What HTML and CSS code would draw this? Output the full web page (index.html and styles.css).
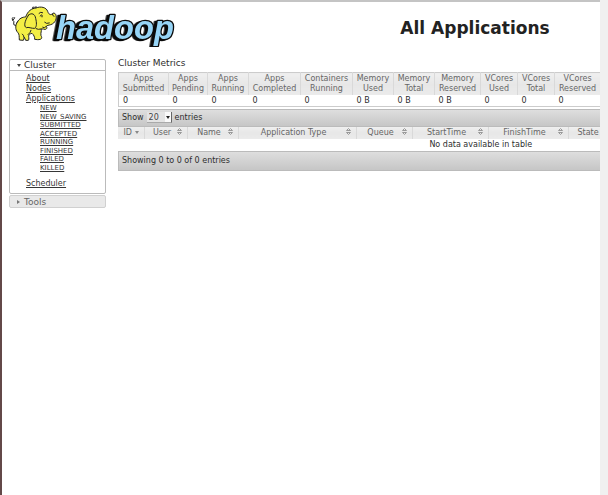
FILE: index.html
```
<!DOCTYPE html>
<html lang="en">
<head>
  <meta charset="UTF-8" />
  <title>All Applications</title>
  <link rel="stylesheet" href="styles.css">
</head>
<body>

  <div class="page">
    <header class="header">
      <svg class="logo" viewBox="27 15 510 126" role="img" aria-label="hadoop">
        <g class="elephant">
          <path d="M49 77 Q38 76 41 69 Q45 64 38 61 Q34 56 39 52 M38 61 Q43 58 44 53" fill="none" />
          <path d="M98 27 Q95 19 102 21 M104 25 Q103 18 110 21" fill="none" />
          <path d="M52 66 C58 55 67 51 77 51 C83 33 95 25 108 24 C122 18 139 22 143 34 C146 43 151 46 157 42 C159 38 164 38 167 43 C172 54 166 70 152 74 C145 76 141 76 139 79 C144 85 137 91 130 87 L123 87 C126 93 121 98 123 107 C128 115 124 119 113 119 L104 118 C105 112 101 104 96 100 C92 102 89 101 87 104 C84 110 89 117 85 121 L77 121 L73 112 L70 121 L58 120 C57 110 59 103 53 97 C45 89 46 74 52 66 Z" />
          <path d="M86 45 C95 37 105 42 107 55 C110 68 111 80 104 85 C95 86 85 80 79 83 C71 80 73 63 86 45 Z" />
          <path d="M121 48 Q123 41 127 46 M117 40 Q122 34 128 38 M134 67 Q139 73 148 69 M128 82 Q133 86 138 80 M157 42 Q157 48 162 49 M108 86 Q115 90 123 87 M84 104 Q91 99 93 91 M72 112 Q71 104 67 102" fill="none" />
          <circle cx="126" cy="50" r="2" fill="#111" />
        </g>
        <text class="logo-text" x="168" y="116">hadoop</text>
      </svg>
      <h1>All Applications</h1>
    </header>

    <div class="content">
      <nav class="sidebar">
        <section class="panel">
          <h3><span class="arrow-down"></span>Cluster</h3>
          <ul class="menu">
            <li><a href="#about">About</a></li>
            <li><a href="#nodes">Nodes</a></li>
            <li><a href="#apps">Applications</a>
              <ul class="states">
                <li><a href="#new">NEW</a></li>
                <li><a href="#new-saving">NEW_SAVING</a></li>
                <li><a href="#submitted">SUBMITTED</a></li>
                <li><a href="#accepted">ACCEPTED</a></li>
                <li><a href="#running">RUNNING</a></li>
                <li><a href="#finished">FINISHED</a></li>
                <li><a href="#failed">FAILED</a></li>
                <li><a href="#killed">KILLED</a></li>
              </ul>
            </li>
            <li><a href="#scheduler">Scheduler</a></li>
          </ul>
        </section>
        <h3 class="tools"><span class="arrow-right"></span>Tools</h3>
      </nav>

      <main class="main">
        <h2>Cluster Metrics</h2>
        <table class="metrics">
          <colgroup>
            <col class="w50"><col class="w39"><col class="w41"><col class="w52"><col class="w52"><col class="w41"><col class="w41"><col class="w46"><col class="w37"><col class="w37"><col>
          </colgroup>
          <thead>
            <tr>
              <th>Apps<br>Submitted</th>
              <th>Apps<br>Pending</th>
              <th>Apps<br>Running</th>
              <th>Apps<br>Completed</th>
              <th>Containers<br>Running</th>
              <th>Memory<br>Used</th>
              <th>Memory<br>Total</th>
              <th>Memory<br>Reserved</th>
              <th>VCores<br>Used</th>
              <th>VCores<br>Total</th>
              <th>VCores<br>Reserved</th>
            </tr>
          </thead>
          <tbody>
            <tr>
              <td>0</td>
              <td>0</td>
              <td>0</td>
              <td>0</td>
              <td>0</td>
              <td>0 B</td>
              <td>0 B</td>
              <td>0 B</td>
              <td>0</td>
              <td>0</td>
              <td>0</td>
            </tr>
          </tbody>
        </table>

        <div class="toolbar">
          <label for="length">Show</label>
          <span class="select-box">
            <select id="length">
              <option>20</option>
              <option>50</option>
              <option>100</option>
            </select>
          </span>
          <label for="length">entries</label>
        </div>

        <table class="apps">
          <colgroup>
            <col class="w26"><col class="w43"><col class="w51"><col class="w118"><col class="w56"><col class="w76"><col class="w80"><col>
          </colgroup>
          <thead>
            <tr>
              <th><div class="cell"><span>ID</span><i class="sorted"></i></div></th>
              <th><div class="cell"><span>User</span><svg class="sort" viewBox="0 0 5 7"><path d="M.5 2.5L2.5.5l2 2zM.5 4.5h4l-2 2z" /></svg></div></th>
              <th><div class="cell"><span>Name</span><svg class="sort" viewBox="0 0 5 7"><path d="M.5 2.5L2.5.5l2 2zM.5 4.5h4l-2 2z" /></svg></div></th>
              <th><div class="cell"><span>Application Type</span><svg class="sort" viewBox="0 0 5 7"><path d="M.5 2.5L2.5.5l2 2zM.5 4.5h4l-2 2z" /></svg></div></th>
              <th><div class="cell"><span>Queue</span><svg class="sort" viewBox="0 0 5 7"><path d="M.5 2.5L2.5.5l2 2zM.5 4.5h4l-2 2z" /></svg></div></th>
              <th><div class="cell"><span>StartTime</span><svg class="sort" viewBox="0 0 5 7"><path d="M.5 2.5L2.5.5l2 2zM.5 4.5h4l-2 2z" /></svg></div></th>
              <th><div class="cell"><span>FinishTime</span><svg class="sort" viewBox="0 0 5 7"><path d="M.5 2.5L2.5.5l2 2zM.5 4.5h4l-2 2z" /></svg></div></th>
              <th class="state">State</th>
            </tr>
          </thead>
          <tbody>
            <tr>
              <td colspan="8">No data available in table</td>
            </tr>
          </tbody>
        </table>

        <div class="toolbar info">Showing 0 to 0 of 0 entries</div>
      </main>
    </div>
  </div>

</body>
</html>
```
FILE: styles.css
```
* {
  box-sizing: border-box;
}
body {
  margin: 0;
  min-height: 100vh;
  padding-right: 8px;
  background-color: #f0f0f0;
  font-family: "DejaVu Sans", sans-serif;
  font-size: 8px;
  line-height: 10px;
  color: #2e2e2e;
}
h1, h2, h3 {
  margin: 0;
}
ul {
  list-style: none;
  margin: 0;
  padding: 0;
}
a {
  color: #363636;
}
.page {
  min-height: 100vh;
  background-color: #fff;
  border-top: 2px solid #c4c4c4;
  border-left: 2px solid #634848;
  overflow: hidden;
}

/* header */
.header {
  display: flex;
  height: 57px;
  padding: 3px 0 0 7px;
}
.logo {
  width: 170px;
  height: 42px;
  flex: none;
}
.elephant path {
  stroke: #222;
  stroke-width: 3;
  stroke-linejoin: round;
  stroke-linecap: round;
}
.elephant path:not([fill]) {
  fill: #f3ee45;
}
.logo-text {
  font-family: "Liberation Sans", sans-serif;
  font-size: 98px;
  font-weight: bold;
  font-style: italic;
  fill: #96d4f6;
  stroke: #0a0a0a;
  stroke-width: 8;
  stroke-linejoin: round;
  paint-order: stroke;
  filter: drop-shadow(-8px 3px 0 #0a0a0a);
}
h1 {
  flex: 1;
  padding: 10px 0 0 171px;
  text-align: center;
  white-space: nowrap;
  font-size: 17px;
  line-height: 26px;
  color: #222;
}

/* layout */
.content {
  display: flex;
  gap: 12px;
  padding-left: 7px;
}
.sidebar {
  width: 97px;
  flex: none;
}
.main {
  flex: 1;
  min-width: 0;
  overflow: hidden;
}

/* sidebar */
h3 {
  display: flex;
  align-items: center;
  gap: 3px;
  height: 11px;
  padding-left: 7px;
  font-size: 9px;
  font-weight: normal;
  color: #333;
}
.panel {
  border: 1px solid #bbb;
  border-radius: 2px;
}
.panel h3 {
  border-bottom: 1px solid #bbb;
}
.arrow-down {
  border: 2px solid transparent;
  border-top: 3px solid #444;
  border-bottom: 0;
}
.arrow-right {
  border: 2px solid transparent;
  border-left: 3px solid #777;
  border-right: 0;
  margin-right: 1px;
}
.menu {
  padding: 3px 0 4px 16px;
}
.states {
  display: grid;
  grid-auto-rows: 1fr;
  height: 68px;
  margin: 0 0 7px 14px;
  font-size: 7px;
  line-height: 8px;
}
.tools {
  height: 13px;
  margin-top: 1px;
  border: 1px solid #d0d0d0;
  border-radius: 2px;
  background: #e9e9e9;
  color: #666;
}

/* tables */
h2 {
  height: 13px;
  font-size: 9px;
  font-weight: normal;
  line-height: 9px;
}
table {
  width: 100%;
  table-layout: fixed;
  border-collapse: collapse;
}
th, td {
  padding: 0;
  white-space: nowrap;
}
th {
  font-weight: normal;
  color: #666;
  background: linear-gradient(#efefef, #e7e7e7 50%, #ebebeb);
  border-right: 1px solid #d9d9d9;
}
.metrics {
  border: 1px solid #ccc;
  border-right: 0;
  margin-bottom: 2px;
}
.metrics th {
  height: 22px;
}
.metrics td {
  height: 11px;
  padding: 1px 0 0 4px;
  line-height: 10px;
}
.metrics th:last-child {
  border-right: 0;
}
.apps {
  width: 726px;
}
.apps th {
  height: 12px;
}
.apps td {
  height: 12px;
  padding-top: 1px;
  text-align: center;
}
.apps .state {
  padding-left: 9px;
  text-align: left;
}
.cell {
  display: flex;
  align-items: center;
  height: 10px;
  padding: 0 5px 0 3px;
}
.cell span {
  flex: 1;
}
.sort {
  width: 5px;
  height: 7px;
  margin-bottom: 2px;
  fill: none;
  stroke: #999;
}
.sorted {
  border: 2px solid transparent;
  border-top: 3px solid #888;
  border-bottom: 0;
}
.w26 { width: 26px; }
.w37 { width: 37px; }
.w39 { width: 39px; }
.w41 { width: 41px; }
.w43 { width: 43px; }
.w46 { width: 46px; }
.w50 { width: 50px; }
.w51 { width: 51px; }
.w52 { width: 52px; }
.w56 { width: 56px; }
.w76 { width: 76px; }
.w80 { width: 80px; }
.w118 { width: 118px; }

/* toolbars */
.toolbar {
  display: flex;
  align-items: center;
  gap: 3px;
  height: 18px;
  padding-left: 3px;
  border: 1px solid #bbb;
  border-right: 0;
  background: linear-gradient(#dedede, #c6c6c6);
}
.info {
  height: 20px;
}
.select-box {
  position: relative;
  display: flex;
}
.select-box::after {
  content: "";
  position: absolute;
  right: 2px;
  top: 4px;
  border: 2px solid transparent;
  border-top: 3px solid #222;
  border-bottom: 0;
  pointer-events: none;
}
select {
  appearance: none;
  width: 25px;
  height: 11px;
  padding: 0 0 0 2px;
  border: 0;
  border-right: 1px solid #666;
  border-bottom: 1px solid #aaa;
  background: linear-gradient(to right, #e4e4e4 18px, #fafafa 18px);
  font-family: inherit;
  font-size: 8px;
  color: #444;
}
```
